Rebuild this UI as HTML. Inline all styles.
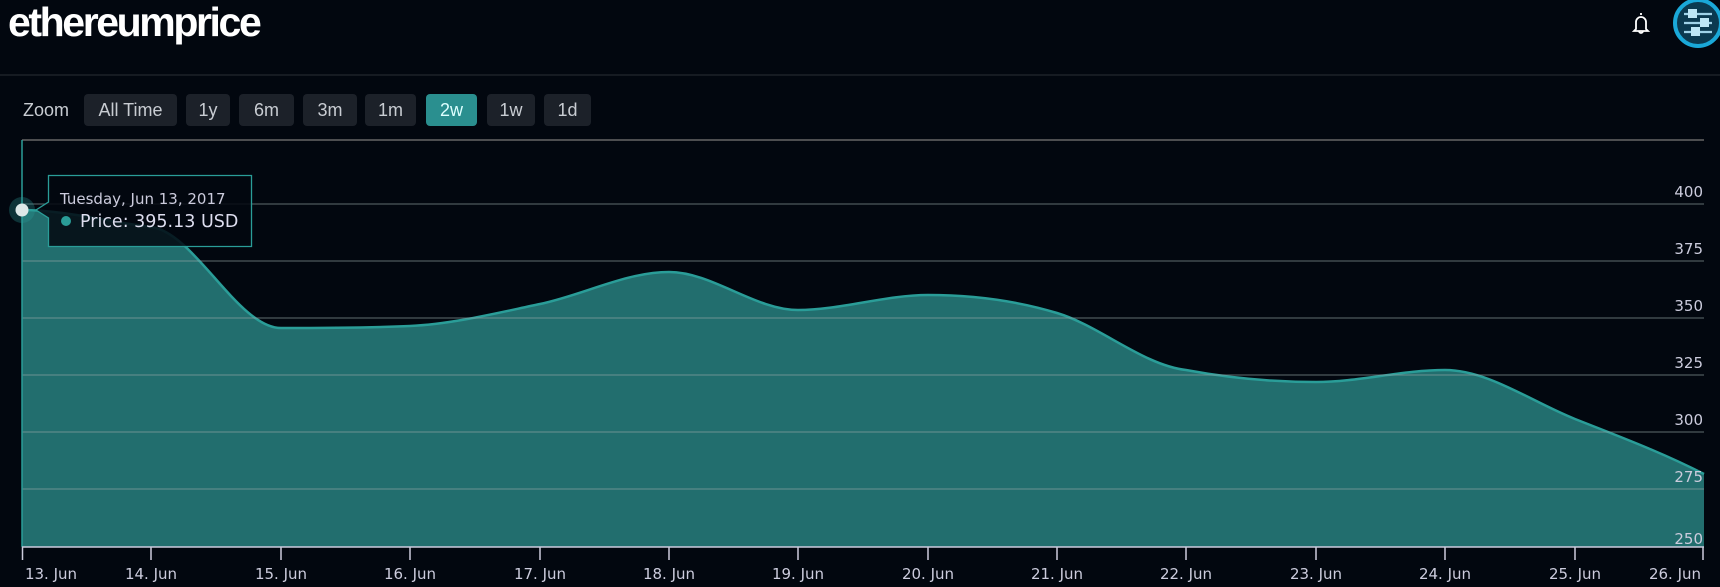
<!DOCTYPE html>
<html><head><meta charset="utf-8"><style>
body{margin:0;width:1720px;height:587px;background:#02070f;overflow:hidden;font-family:"Liberation Sans",Arial,sans-serif;position:relative}
.t{position:absolute;left:8px;top:-1px;font-size:41px;font-weight:bold;color:#fff;letter-spacing:-2.4px}
.hl{position:absolute;left:0;top:74px;width:1720px;height:2px;background:#161b22}
.z{position:absolute;top:94px;height:32px;line-height:32px;font-size:18px;color:#c8ccd2;background:#1c2129;border-radius:4px;text-align:center}
.zl{position:absolute;left:23px;top:94px;line-height:32px;font-size:18px;color:#c8ccd2}
</style></head><body>
<div class="t">ethereumprice</div>
<svg style="position:absolute;left:1628px;top:10px" width="26" height="26" viewBox="0 0 26 26"><path d="M13 3v2M8 19V12a5 5 0 0 1 10 0v7l2 2H6z M11 21a2 2 0 0 0 4 0" fill="none" stroke="#fff" stroke-width="1.8"/></svg>
<svg style="position:absolute;left:1672px;top:-3px" width="52" height="52" viewBox="0 0 52 52"><circle cx="26" cy="26" r="23" fill="#0b3a50" stroke="#1aa8d8" stroke-width="4"/><g stroke="#9fd3e8" stroke-width="2.2"><line x1="12" y1="17" x2="40" y2="17"/><line x1="12" y1="26" x2="40" y2="26"/><line x1="12" y1="35" x2="40" y2="35"/></g><g fill="#bde6f5"><rect x="16" y="12" width="9" height="9"/><rect x="28" y="21" width="9" height="9"/><rect x="19" y="30" width="9" height="9"/></g></svg>
<div class="hl"></div>
<div class="zl">Zoom</div>
<div class="z" style="left:84px;width:93px">All Time</div>
<div class="z" style="left:186px;width:44px">1y</div>
<div class="z" style="left:239px;width:55px">6m</div>
<div class="z" style="left:303px;width:54px">3m</div>
<div class="z" style="left:365px;width:51px">1m</div>
<div class="z" style="left:426px;width:51px;background:#2a8f8f;color:#dff">2w</div>
<div class="z" style="left:487px;width:48px">1w</div>
<div class="z" style="left:544px;width:47px">1d</div>
<svg style="position:absolute;left:0;top:0" width="1720" height="587">
<line x1="22" y1="140" x2="1704" y2="140" stroke="#666" stroke-width="1.5"/>
<path d="M22 210 C65 210 108 222 151 227 C194 232 238 328 281 328 C324 328 367 328 410 326 C453 324 497 313 540 304 C583 295 626 272 669 272 C712 272 755 310 798 310 C841 310 885 295 928 295 C971 295 1014 300 1057 313 C1100 326 1143 365 1186 370 C1229 378 1273 382 1316 382 C1359 382 1402 370 1445 370 C1488 370 1532 402 1575 419 C1618 436 1661 452 1704 474 L1704 547 L22 547 Z" fill="#226e6e"/>
<path d="M22 210 C65 210 108 222 151 227 C194 232 238 328 281 328 C324 328 367 328 410 326 C453 324 497 313 540 304 C583 295 626 272 669 272 C712 272 755 310 798 310 C841 310 885 295 928 295 C971 295 1014 300 1057 313 C1100 326 1143 365 1186 370 C1229 378 1273 382 1316 382 C1359 382 1402 370 1445 370 C1488 370 1532 402 1575 419 C1618 436 1661 452 1704 474" fill="none" stroke="#2a9d98" stroke-width="2.5"/>
<g stroke="#9aa" stroke-opacity="0.5" stroke-width="1.2">
<line x1="22" y1="204" x2="1704" y2="204"/><line x1="22" y1="261" x2="1704" y2="261"/><line x1="22" y1="318" x2="1704" y2="318"/><line x1="22" y1="375" x2="1704" y2="375"/><line x1="22" y1="432" x2="1704" y2="432"/><line x1="22" y1="489" x2="1704" y2="489"/></g>
<line x1="22" y1="140" x2="22" y2="547" stroke="#2a9d98" stroke-width="1.5"/>
<line x1="22" y1="547" x2="1704" y2="547" stroke="#ccd" stroke-width="1.5"/>
<g stroke="#ccd" stroke-width="1.5">
<line x1="22.5" y1="547" x2="22.5" y2="560"/><line x1="151" y1="547" x2="151" y2="560"/><line x1="281" y1="547" x2="281" y2="560"/><line x1="410" y1="547" x2="410" y2="560"/><line x1="540" y1="547" x2="540" y2="560"/><line x1="669" y1="547" x2="669" y2="560"/><line x1="798" y1="547" x2="798" y2="560"/><line x1="928" y1="547" x2="928" y2="560"/><line x1="1057" y1="547" x2="1057" y2="560"/><line x1="1186" y1="547" x2="1186" y2="560"/><line x1="1316" y1="547" x2="1316" y2="560"/><line x1="1445" y1="547" x2="1445" y2="560"/><line x1="1575" y1="547" x2="1575" y2="560"/><line x1="1703" y1="547" x2="1703" y2="560"/></g>
<g font-family="DejaVu Sans,sans-serif" font-size="15" fill="#ccd" text-anchor="end">
<text x="1703" y="197">400</text><text x="1703" y="254">375</text><text x="1703" y="311">350</text><text x="1703" y="368">325</text><text x="1703" y="425">300</text><text x="1703" y="482">275</text><text x="1703" y="544">250</text></g>
<g font-family="DejaVu Sans,sans-serif" font-size="15" fill="#ccd" text-anchor="middle">
<text x="51" y="579">13. Jun</text><text x="151" y="579">14. Jun</text><text x="281" y="579">15. Jun</text><text x="410" y="579">16. Jun</text><text x="540" y="579">17. Jun</text><text x="669" y="579">18. Jun</text><text x="798" y="579">19. Jun</text><text x="928" y="579">20. Jun</text><text x="1057" y="579">21. Jun</text><text x="1186" y="579">22. Jun</text><text x="1316" y="579">23. Jun</text><text x="1445" y="579">24. Jun</text><text x="1575" y="579">25. Jun</text><text x="1675" y="579">26. Jun</text></g>
<circle cx="22" cy="210" r="13" fill="#2a9d98" fill-opacity="0.3"/>
<circle cx="22" cy="210" r="6.5" fill="#dde8e8"/>
<path d="M48.5 175.5 H251.5 V246.5 H48.5 V218 L36 210 L48.5 202 Z" fill="#02070f" fill-opacity="0.85" stroke="#2a9d98" stroke-width="1.3"/>
<text x="60" y="204" font-family="DejaVu Sans,sans-serif" font-size="15" fill="#ccd">Tuesday, Jun 13, 2017</text>
<circle cx="66" cy="221" r="5" fill="#2a9d98"/>
<text x="80" y="227" font-family="DejaVu Sans,sans-serif" font-size="17.5" fill="#dde">Price: 395.13 USD</text>
</svg>
</body></html>
